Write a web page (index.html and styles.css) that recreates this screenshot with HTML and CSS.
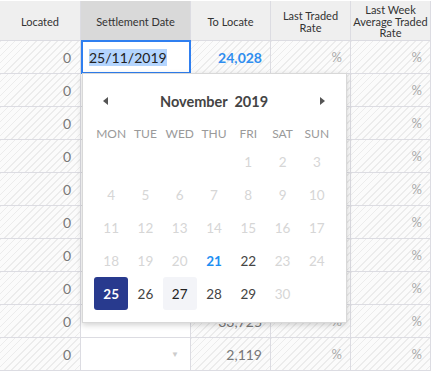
FILE: index.html
```html
<!DOCTYPE html>
<html>
<head>
<meta charset="utf-8">
<link rel="stylesheet" href="styles.css">
</head>
<body>
<div class="grid">
  <div class="hcell">Located</div>
  <div class="hcell hcell-active">Settlement Date</div>
  <div class="hcell">To Locate</div>
  <div class="hcell">Last Traded<br>Rate</div>
  <div class="hcell">Last Week<br>Average Traded<br>Rate</div>

  <div class="cell striped">0</div>
  <div class="cell plain editing"><span class="sel">25/11/2019</span></div>
  <div class="cell striped blue">24,028</div>
  <div class="cell striped pct">%</div>
  <div class="cell striped pct">%</div>

  <div class="cell striped">0</div><div class="cell plain"></div><div class="cell striped"></div><div class="cell striped pct"></div><div class="cell striped pct">%</div>
  <div class="cell striped">0</div><div class="cell plain"></div><div class="cell striped"></div><div class="cell striped pct"></div><div class="cell striped pct">%</div>
  <div class="cell striped">0</div><div class="cell plain"></div><div class="cell striped"></div><div class="cell striped pct"></div><div class="cell striped pct">%</div>
  <div class="cell striped">0</div><div class="cell plain"></div><div class="cell striped"></div><div class="cell striped pct"></div><div class="cell striped pct">%</div>
  <div class="cell striped">0</div><div class="cell plain"></div><div class="cell striped"></div><div class="cell striped pct"></div><div class="cell striped pct">%</div>
  <div class="cell striped">0</div><div class="cell plain"></div><div class="cell striped"></div><div class="cell striped pct"></div><div class="cell striped pct">%</div>
  <div class="cell striped">0</div><div class="cell plain"></div><div class="cell striped"></div><div class="cell striped pct"></div><div class="cell striped pct">%</div>
  <div class="cell striped">0</div><div class="cell plain"></div><div class="cell striped">33,725</div><div class="cell striped pct">%</div><div class="cell striped pct">%</div>
  <div class="cell striped">0</div><div class="cell plain"><span class="caret">▼</span></div><div class="cell striped">2,119</div><div class="cell striped pct">%</div><div class="cell striped pct">%</div>
</div>

<div class="picker">
  <div class="pk-head">
    <span class="arrow arrow-left"></span>
    <span class="pk-title">November&nbsp; 2019</span>
    <span class="arrow arrow-right"></span>
  </div>
  <div class="pk-week">
    <span>MON</span><span>TUE</span><span>WED</span><span>THU</span><span>FRI</span><span>SAT</span><span>SUN</span>
  </div>
  <div class="pk-days">
    <span></span><span></span><span></span><span></span>
    <span class="off">1</span><span class="off">2</span><span class="off">3</span>
    <span class="off">4</span><span class="off">5</span><span class="off">6</span><span class="off">7</span><span class="off">8</span><span class="off">9</span><span class="off">10</span>
    <span class="off">11</span><span class="off">12</span><span class="off">13</span><span class="off">14</span><span class="off">15</span><span class="off">16</span><span class="off">17</span>
    <span class="off">18</span><span class="off">19</span><span class="off">20</span><span class="today">21</span><span>22</span><span class="off">23</span><span class="off">24</span>
    <span class="chosen">25</span><span>26</span><span class="hover">27</span><span>28</span><span>29</span><span class="off">30</span><span></span>
  </div>
</div>
</body>
</html>
```
FILE: styles.css
```css
* { box-sizing: border-box; }
body {
  margin: 0;
  font-family: Lato, "Open Sans", sans-serif;
  background: #fff;
  position: relative;
  width: 432px;
  height: 371px;
  overflow: hidden;
}
.grid {
  margin-top: 1px;
  display: grid;
  grid-template-columns: 81px 110px 80px 80px 80px;
  grid-template-rows: 40px repeat(10, 33px);
  border-top: 1px solid #dcdce2;
  width: 431px;
}
.hcell {
  background: #efefef;
  border-right: 1px solid #dcdce2;
  border-bottom: 1px solid #dcdce2;
  display: flex;
  align-items: center;
  justify-content: center;
  text-align: center;
  font-size: 11px;
  line-height: 11.5px;
  color: #333;
  margin-top: -1px;
  height: 40px;
  padding-top: 2px;
}
.hcell-active { background: #d9d9d9; }
.cell {
  border-right: 1px solid #dcdce2;
  border-bottom: 1px solid #dcdce2;
  display: flex;
  align-items: center;
  justify-content: flex-end;
  padding-right: 8px;
  font-size: 14px;
  color: #777;
  margin-top: -1px;
  height: 33px;
}
.cell:nth-child(5n+1) { padding-right: 9px; }
.striped {
  background: repeating-linear-gradient(135deg, #ececec 0, #ececec 1.2px, #fbfbfb 1.2px, #fbfbfb 5px);
}
.plain { background: #fff; }
.blue { color: #2f8ef0; font-weight: 700; }
.pct { color: #aaa; font-size: 13px; }
.editing {
  position: relative;
  justify-content: flex-start;
  padding-left: 8px;
  color: #222;
}
.editing::after {
  content: "";
  position: absolute;
  left: 0;
  top: -1px;
  right: -1px;
  bottom: -1px;
  border: 2px solid #2f7ff0;
}
.sel { background: #b4d5fe; line-height: 17px; }
.caret {
  font-size: 8px;
  color: #ccc;
  margin-right: 3px;
}

.picker {
  position: absolute;
  left: 82px;
  top: 73px;
  width: 265px;
  height: 250px;
  background: #fff;
  border: 1px solid #d8d8d8;
  box-shadow: 0 2px 6px rgba(0,0,0,0.18);
  padding: 13px 12px 0 11px;
}
.pk-head {
  height: 28px;
  display: flex;
  align-items: center;
  justify-content: space-between;
  padding: 0 9px 0 9px;
}
.pk-title {
  font-size: 14.5px;
  font-weight: 700;
  color: #444;
}
.arrow { width: 0; height: 0; border-top: 4.5px solid transparent; border-bottom: 4.5px solid transparent; }
.arrow-left { border-right: 5px solid #555; }
.arrow-right { border-left: 5px solid #555; }
.pk-week {
  margin-top: 6px;
  height: 24px;
  display: grid;
  grid-template-columns: repeat(7, 1fr);
  align-items: center;
  text-align: center;
  font-size: 12px;
  color: #9a9a9a;
}
.pk-days {
  display: grid;
  grid-template-columns: repeat(7, 1fr);
  grid-auto-rows: 33px;
}
.pk-days span {
  display: flex;
  align-items: center;
  justify-content: center;
  font-size: 13.5px;
  color: #444;
  border-radius: 3px;
}
.pk-days .off { color: #d6d6d6; }
.pk-days .today { color: #1e8ff2; font-weight: 700; }
.pk-days .chosen { background: #283a8e; color: #fff; font-weight: 700; }
.pk-days .hover { background: #f3f4f8; color: #222; }
```
